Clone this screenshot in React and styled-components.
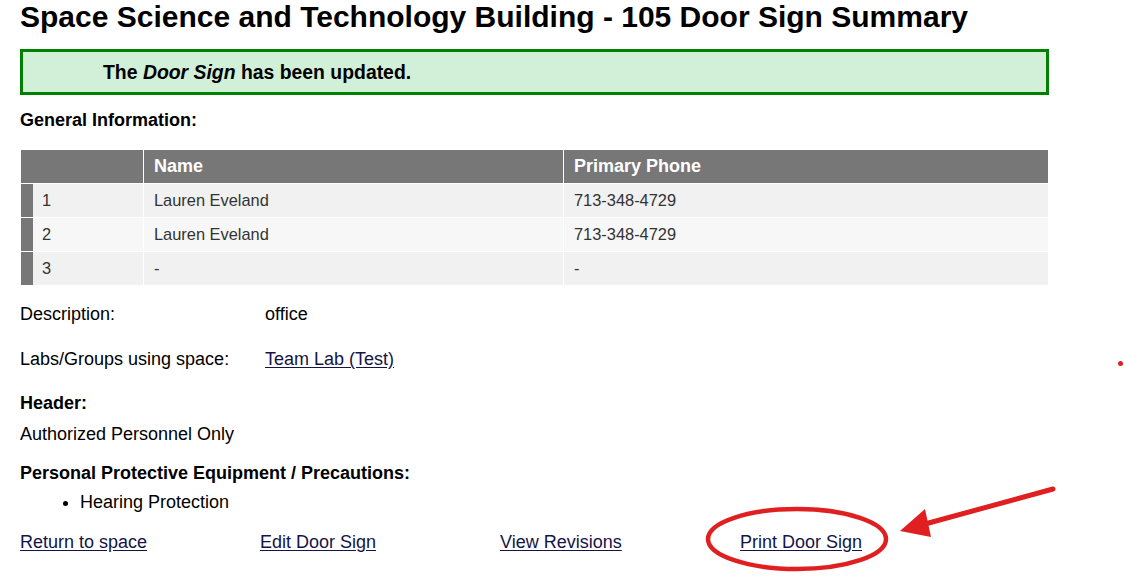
import React from "react";
import styled, { createGlobalStyle } from "styled-components";

const GlobalStyle = createGlobalStyle`
  body {
    margin: 0;
    background: #ffffff;
    font-family: "Liberation Sans", Arial, sans-serif;
    color: #000000;
  }
`;

const Page = styled.div`
  position: relative;
  box-sizing: border-box;
  min-height: 580px;
  padding-left: 20px;
  width: 1124px;
`;

const Content = styled.div`
  width: 1029px;
`;

const Title = styled.h1`
  margin: 0;
  font-size: 30px;
  line-height: 34px;
  font-weight: 700;
  white-space: nowrap;
`;

const Alert = styled.div`
  box-sizing: border-box;
  margin-top: 15px;
  height: 46px;
  border: 3px solid #008000;
  background: #d2efd8;
  padding-left: 80px;
  font-size: 19.4px;
  line-height: 40px;
  font-weight: 700;
`;

const SectionTitle = styled.div`
  margin-top: ${(p) => p.$top || 0}px;
  font-size: 18px;
  line-height: 22px;
  font-weight: 700;
`;

const Table = styled.table`
  width: 1029px;
  margin-top: 18px;
  border-collapse: separate;
  border-spacing: 1px;
  font-size: 16.4px;
`;

const HeadCell = styled.th`
  height: 33px;
  padding: 0 0 0 10px;
  box-sizing: border-box;
  background: #777777;
  color: #ffffff;
  font-size: 18px;
  font-weight: 700;
  text-align: left;
  width: ${(p) => p.$w || "auto"};
`;

const Row = styled.tr`
  background: ${(p) => (p.$alt ? "#f7f7f7" : "#f1f1f1")};
`;

const Cell = styled.td`
  height: 33px;
  padding: 0 0 0 10px;
  box-sizing: border-box;
  color: #333333;
  ${(p) => p.$bar && "border-left: 12px solid #777777; padding-left: 9px;"}
`;

const InfoRow = styled.div`
  display: grid;
  grid-template-columns: 245px 1fr;
  margin-top: ${(p) => p.$top}px;
  font-size: 18px;
  line-height: 22px;
`;

const Text = styled.div`
  margin-top: ${(p) => p.$top || 0}px;
  font-size: 18px;
  line-height: 22px;
`;

const Link = styled.a`
  color: #141446;
  text-decoration: underline;
  text-underline-offset: 2px;
  cursor: pointer;
`;

const List = styled.ul`
  margin: 7px 0 0 0;
  padding-left: 60px;
  font-size: 18px;
  line-height: 22px;
`;

const Links = styled.div`
  display: grid;
  grid-template-columns: repeat(4, 240px);
  margin-top: 18px;
  font-size: 18px;
  line-height: 22px;
`;

const Highlight = styled.span`
  position: relative;
  justify-self: start;
`;

const Ellipse = styled.svg`
  position: absolute;
  left: -35px;
  top: -25px;
  overflow: visible;
  pointer-events: none;
`;

const Arrow = styled.svg`
  position: absolute;
  left: 895px;
  top: 484px;
  overflow: visible;
  pointer-events: none;
`;

const Dot = styled.div`
  position: absolute;
  left: 1118px;
  top: 361px;
  width: 5px;
  height: 5px;
  border-radius: 50%;
  background: #e02020;
`;

const people = [
  { n: 1, name: "Lauren Eveland", phone: "713-348-4729" },
  { n: 2, name: "Lauren Eveland", phone: "713-348-4729" },
  { n: 3, name: "-", phone: "-" },
];

export default function App() {
  return (
    <>
      <GlobalStyle />
      <Page>
        <Content>
          <Title>Space Science and Technology Building - 105 Door Sign Summary</Title>
          <Alert>
            The <i>Door Sign</i> has been updated.
          </Alert>
          <SectionTitle $top={14}>General Information:</SectionTitle>
          <Table>
            <thead>
              <tr>
                <HeadCell $w="122px" />
                <HeadCell $w="419px">Name</HeadCell>
                <HeadCell>Primary Phone</HeadCell>
              </tr>
            </thead>
            <tbody>
              {people.map((p, i) => (
                <Row key={p.n} $alt={i % 2 === 1}>
                  <Cell $bar>{p.n}</Cell>
                  <Cell>{p.name}</Cell>
                  <Cell>{p.phone}</Cell>
                </Row>
              ))}
            </tbody>
          </Table>
          <InfoRow $top={17}>
            <span>Description:</span>
            <span>office</span>
          </InfoRow>
          <InfoRow $top={23}>
            <span>Labs/Groups using space:</span>
            <span>
              <Link>Team Lab (Test)</Link>
            </span>
          </InfoRow>
          <SectionTitle $top={22}>Header:</SectionTitle>
          <Text $top={9}>Authorized Personnel Only</Text>
          <SectionTitle $top={17}>Personal Protective Equipment / Precautions:</SectionTitle>
          <List>
            <li>Hearing Protection</li>
          </List>
          <Links>
            <Link>Return to space</Link>
            <Link>Edit Door Sign</Link>
            <Link>View Revisions</Link>
            <Highlight>
              <Link>Print Door Sign</Link>
              <Ellipse width="184" height="66" viewBox="0 0 184 66">
                <ellipse cx="92" cy="33" rx="89" ry="30" fill="none" stroke="#e02020" strokeWidth="4.5" />
              </Ellipse>
            </Highlight>
          </Links>
        </Content>
        <Arrow width="165" height="60" viewBox="0 0 165 60">
          <line x1="158" y1="5" x2="30" y2="40" stroke="#e02020" strokeWidth="5" strokeLinecap="round" />
          <polygon points="5,47 30,25 36,53" fill="#e02020" />
        </Arrow>
        <Dot />
      </Page>
    </>
  );
}
